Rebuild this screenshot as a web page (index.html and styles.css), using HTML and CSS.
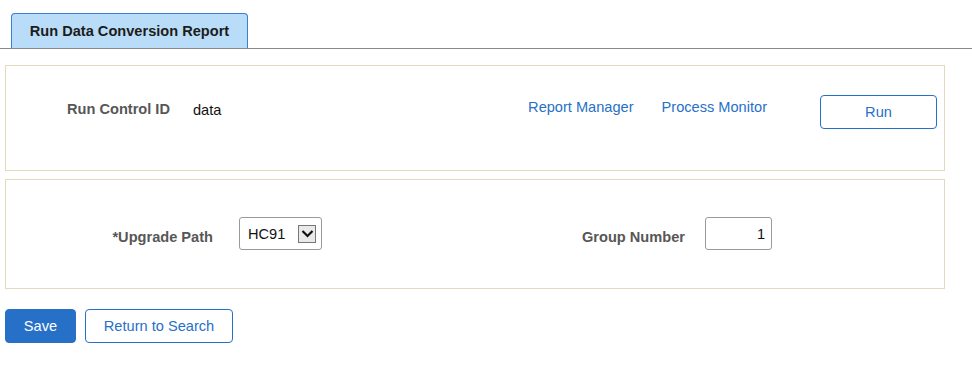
FILE: index.html
```html
<!DOCTYPE html>
<html lang="en">
<head>
    <meta charset="UTF-8">
    <title>Run Data Conversion Report</title>
    <link rel="stylesheet" href="styles.css">
</head>
<body>
    <div class="tab-bar">
        <div class="tab">Run Data Conversion Report</div>
    </div>

    <div class="box run-box">
        <span class="label run-label">Run Control ID</span>
        <span class="value">data</span>
        <div class="links">
            <a href="#">Report Manager</a>
            <a href="#">Process Monitor</a>
        </div>
        <button type="button" class="btn btn-outline run-btn">Run</button>
    </div>

    <div class="box params-box">
        <label class="label path-label">*Upgrade Path</label>
        <div class="select">
            <span>HC91</span>
            <span class="arrow">
                <svg width="13" height="9" viewBox="0 0 13 9"><path d="M1.5 2 L6.5 7 L11.5 2" fill="none" stroke="#111" stroke-width="2.2"/></svg>
            </span>
        </div>
        <label class="label group-label">Group Number</label>
        <input type="text" class="num" value="1">
    </div>

    <div class="actions">
        <button type="button" class="btn btn-primary">Save</button>
        <button type="button" class="btn btn-outline">Return to Search</button>
    </div>
</body>
</html>
```

FILE: styles.css
```css
* {
    margin: 0;
    padding: 0;
    box-sizing: border-box;
    font-family: "Liberation Sans", Arial, sans-serif;
}

body {
    background-color: white;
    font-size: 14.6px;
    color: #222;
}

.tab-bar {
    padding: 13px 0 0 11px;
    border-bottom: 1px solid #8a8a8a;
    height: 49px;
}

.tab {
    width: 237px;
    height: 35px;
    background-color: #b9dcf8;
    border: 1px solid #3b7fd0;
    border-bottom: none;
    border-radius: 4px 4px 0 0;
    font-weight: bold;
    font-size: 14.6px;
    color: #1c1c1c;
    text-align: center;
    line-height: 34px;
}

.box {
    margin: 16px 0 0 5px;
    width: 940px;
    border: 1px solid #e2d9bf;
    display: flex;
    align-items: flex-start;
}

.run-box {
    height: 106px;
    padding: 29px 7px 0 61px;
}

.params-box {
    margin-top: 8px;
    height: 110px;
    padding-top: 37px;
}

.label {
    font-weight: bold;
    color: #575757;
    line-height: 16px;
}

.run-label {
    width: 126px;
    margin-top: 6px;
}

.value {
    margin-top: 7px;
    line-height: 16px;
    color: #111;
}

.links {
    margin-left: auto;
    margin-top: 4px;
    display: flex;
    gap: 28px;
}

.links a {
    color: #2770c7;
    text-decoration: none;
    line-height: 16px;
}

.btn {
    height: 34px;
    border-radius: 4px;
    font-size: 14.6px;
    cursor: pointer;
}

.btn-outline {
    background-color: white;
    color: #2770c7;
    border: 1px solid #2770c7;
}

.btn-primary {
    background-color: #2770c7;
    color: white;
    border: 1px solid #2770c7;
}

.run-btn {
    width: 117px;
    margin-left: 53px;
}

.path-label {
    width: 207px;
    text-align: right;
    margin-top: 12px;
}

.select {
    margin-left: 26px;
    width: 83px;
    height: 33px;
    border: 1px solid #9a9a9a;
    border-radius: 3px;
    display: flex;
    align-items: center;
    padding-left: 8px;
    color: #111;
}

.select .arrow {
    margin-left: auto;
    margin-right: 5px;
    width: 18px;
    height: 18px;
    border: 1px solid #777;
    background-color: #e9e9e9;
    display: flex;
    align-items: center;
    justify-content: center;
}

.group-label {
    margin-left: 260px;
    margin-top: 12px;
    width: 123px;
}

.num {
    width: 67px;
    height: 33px;
    border: 1px solid #9a9a9a;
    border-radius: 3px;
    text-align: right;
    padding-right: 6px;
    font-size: 14.6px;
    color: #111;
    outline: none;
}

.actions {
    margin: 20px 0 0 5px;
    display: flex;
    gap: 9px;
}

.actions .btn-primary {
    width: 71px;
}

.actions .btn-outline {
    width: 148px;
}
```
